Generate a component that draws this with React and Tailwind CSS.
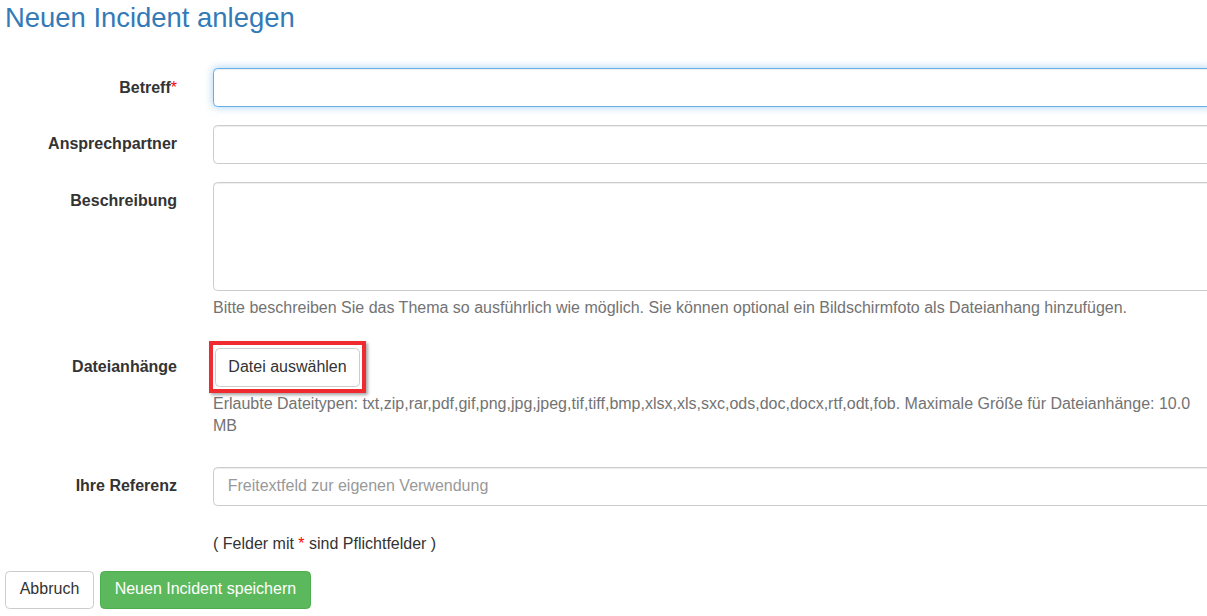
export default function App() {
  const labelCls =
    "w-[172px] shrink-0 text-right font-bold text-[#333] pt-[8px] leading-[22.86px]";
  const inputBase =
    "block w-full h-[39px] rounded-[4.5px] border bg-white px-[13.7px] text-[16px] text-[#555] outline-none placeholder:text-[#999]";
  return (
    <div className="w-full overflow-hidden bg-white font-['Liberation_Sans',Arial,sans-serif] text-[16px] leading-[22.86px] text-[#333]">
      <div className="pl-[5px]">
        <h3 className="mt-[3px] text-[27.43px] leading-[30px] font-normal text-[#337ab7]">
          Neuen Incident anlegen
        </h3>

        <form className="mt-[35px] w-[1250px]">
          {/* Betreff */}
          <div className="flex mb-[18px]">
            <label className={labelCls + " pt-[9px]"}>
              Betreff<span className="text-[#ff0000] font-normal">*</span>
            </label>
            <div className="ml-[36px] w-[1000px] shrink-0">
              <input
                type="text"
                className={
                  inputBase +
                  " border-[#66afe9] shadow-[inset_0_1px_1px_rgba(0,0,0,0.075),0_0_8px_rgba(102,175,233,0.6)]"
                }
              />
            </div>
          </div>

          {/* Ansprechpartner */}
          <div className="flex mb-[18px]">
            <label className={labelCls}>Ansprechpartner</label>
            <div className="ml-[36px] w-[1000px] shrink-0">
              <input
                type="text"
                className={
                  inputBase +
                  " border-[#ccc] shadow-[inset_0_1px_1px_rgba(0,0,0,0.075)]"
                }
              />
            </div>
          </div>

          {/* Beschreibung */}
          <div className="flex mb-[17px]">
            <label className={labelCls}>Beschreibung</label>
            <div className="ml-[36px] w-[1000px] shrink-0">
              <textarea className="block w-full h-[109px] resize-none rounded-[4.5px] border border-[#ccc] bg-white px-[13.7px] py-[6.9px] text-[16px] text-[#555] outline-none shadow-[inset_0_1px_1px_rgba(0,0,0,0.075)]" />
              <p className="mt-[5.7px] mb-[11.4px] text-[#737373]">
                Bitte beschreiben Sie das Thema so ausführlich wie möglich. Sie
                können optional ein Bildschirmfoto als Dateianhang hinzufügen.
              </p>
            </div>
          </div>

          {/* Dateianhänge */}
          <div className="flex mb-[17px]">
            <label className={labelCls}>Dateianhänge</label>
            <div className="ml-[36px] w-[1000px] shrink-0">
              <div className="relative inline-block ml-[2px]">
                <button
                  type="button"
                  className="h-[39px] w-[145px] rounded-[4.5px] border border-[#ccc] bg-white text-[16px] text-[#333]"
                >
                  Datei auswählen
                </button>
                <span className="pointer-events-none absolute left-[-6px] top-[-7px] right-[-6px] bottom-[-6px] border-[4px] border-[#ef2b2f] shadow-[2px_2px_3px_rgba(0,0,0,0.35)]" />
              </div>
              <p className="mt-[5.7px] mb-[11.4px] text-[#737373]">
                Erlaubte Dateitypen:
                txt,zip,rar,pdf,gif,png,jpg,jpeg,tif,tiff,bmp,xlsx,xls,sxc,ods,doc,docx,rtf,odt,fob.
                Maximale Größe für Dateianhänge: 10.0 MB
              </p>
            </div>
          </div>

          {/* Ihre Referenz */}
          <div className="flex mt-[2px]">
            <label className={labelCls}>Ihre Referenz</label>
            <div className="ml-[36px] w-[1000px] shrink-0">
              <input
                type="text"
                placeholder="Freitextfeld zur eigenen Verwendung"
                className={
                  inputBase +
                  " border-[#ccc] shadow-[inset_0_1px_1px_rgba(0,0,0,0.075)]"
                }
              />
            </div>
          </div>

          {/* Pflichtfelder note */}
          <div className="flex mt-[27px]">
            <div className="w-[172px] shrink-0" />
            <p className="ml-[36px]">
              ( Felder mit <span className="text-[#ff0000]">*</span> sind
              Pflichtfelder )
            </p>
          </div>

          {/* Buttons */}
          <div className="mt-[15px] flex gap-[6px]">
            <button
              type="button"
              className="h-[38px] rounded-[4.5px] border border-[#ccc] bg-white px-[13.7px] text-[16px] text-[#333]"
            >
              Abbruch
            </button>
            <button
              type="button"
              className="h-[38px] rounded-[4.5px] border border-[#4cae4c] bg-[#5cb85c] px-[13.7px] text-[16px] text-white"
            >
              Neuen Incident speichern
            </button>
          </div>
        </form>
      </div>
    </div>
  );
}
